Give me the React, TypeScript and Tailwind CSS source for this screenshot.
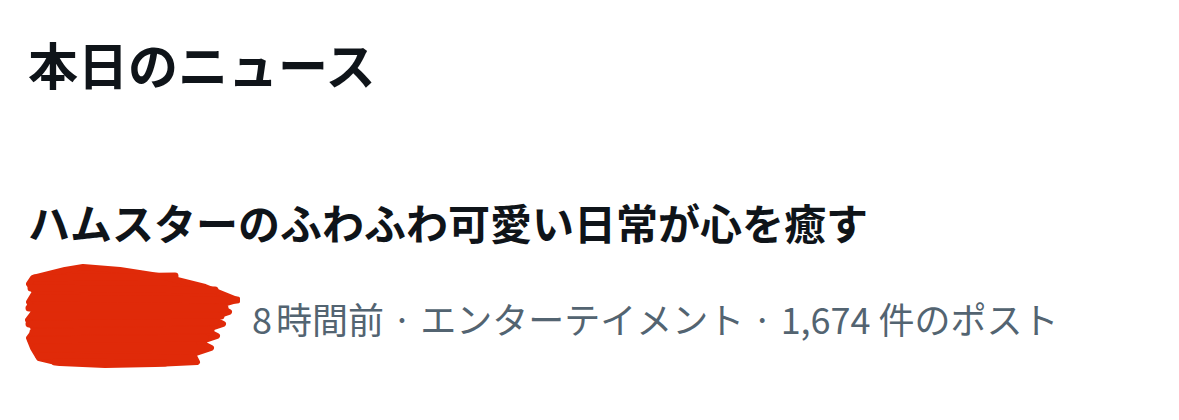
import React from "react";

const jp = { fontFamily: '"Noto Sans CJK JP", "Noto Sans", sans-serif' };

// red scribble that hides the avatars in the screenshot
function Scribble() {
  const lines: [number, number, number, number][] = [
    [10, 14, 150, 12],
    [6, 24, 190, 26],
    [8, 34, 212, 36],
    [4, 44, 200, 44],
    [8, 52, 196, 52],
    [4, 60, 190, 58],
    [8, 68, 186, 66],
    [6, 76, 180, 74],
    [10, 84, 176, 84],
    [14, 92, 168, 94],
    [30, 98, 140, 99],
  ];
  return (
    <svg width="215" height="104" viewBox="0 0 215 104" className="shrink-0">
      <path
        d="M8 14 L40 6 L58 3 L95 6 L140 13 L180 23 L212 36 L192 42 L204 48 L186 54 L198 60 L180 66 L192 72 L174 78 L186 84 L168 90 L172 98 L130 100 L80 101 L35 99 L14 94 L8 84 L4 74 L10 66 L3 56 L9 48 L4 38 L10 28 L4 20 Z"
        fill="#e02a09"
        stroke="#e02a09"
        strokeWidth="6"
        strokeLinejoin="round"
      />
      {lines.map(([x1, y1, x2, y2], i) => (
        <line
          key={i}
          x1={x1}
          y1={y1}
          x2={x2}
          y2={y2}
          stroke="#e02a09"
          strokeWidth="7"
          strokeLinecap="round"
        />
      ))}
    </svg>
  );
}

export default function App() {
  return (
    <div className="h-[420px] w-full overflow-hidden bg-white px-[28px]" style={jp}>
      <h1 className="pt-[38px] text-[50px] font-bold leading-none text-[#0f1419]">
        本日のニュース
      </h1>

      <div className="mt-[113px]">
        <h2 className="text-[42px] font-bold leading-none text-[#0f1419]">
          ハムスターのふわふわ可愛い日常が心を癒す
        </h2>
        <div className="mt-[21px] -ml-[3px] flex items-center gap-[12px]">
          <Scribble />
          <p className="mt-[4px] whitespace-nowrap text-[36px] leading-none text-[#536471]">
            8<span className="ml-[4px]">時間前 · エンターテイメント · 1,674 件のポスト</span>
          </p>
        </div>
      </div>
    </div>
  );
}
